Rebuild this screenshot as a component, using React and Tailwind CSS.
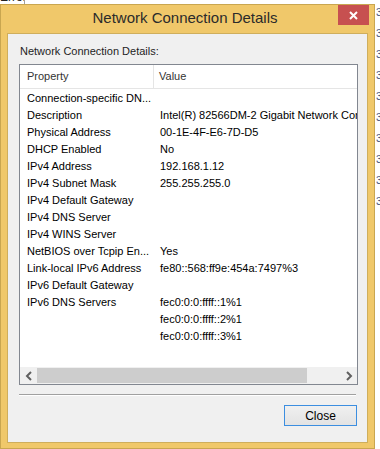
import React from 'react';

const rows = [
  ['Connection-specific DN...', ''],
  ['Description', 'Intel(R) 82566DM-2 Gigabit Network Connection'],
  ['Physical Address', '00-1E-4F-E6-7D-D5'],
  ['DHCP Enabled', 'No'],
  ['IPv4 Address', '192.168.1.12'],
  ['IPv4 Subnet Mask', '255.255.255.0'],
  ['IPv4 Default Gateway', ''],
  ['IPv4 DNS Server', ''],
  ['IPv4 WINS Server', ''],
  ['NetBIOS over Tcpip En...', 'Yes'],
  ['Link-local IPv6 Address', 'fe80::568:ff9e:454a:7497%3'],
  ['IPv6 Default Gateway', ''],
  ['IPv6 DNS Servers', 'fec0:0:0:ffff::1%1'],
  ['', 'fec0:0:0:ffff::2%1'],
  ['', 'fec0:0:0:ffff::3%1'],
];

const font = { fontFamily: '"Liberation Sans", Arial, sans-serif' };

function Chevron({ dir }) {
  return (
    <svg width="8" height="10" viewBox="0 0 8 10">
      <path
        d={dir === 'left' ? 'M6 1 L2 5 L6 9' : 'M2 1 L6 5 L2 9'}
        fill="none"
        stroke="#606060"
        strokeWidth="2"
      />
    </svg>
  );
}

export default function App() {
  return (
    <div className="w-[380px] h-[449px] bg-white overflow-hidden flex" style={font}>
      <div className="w-[375px] flex flex-col">
        {/* window behind, top strip */}
        <div className="h-[4px] flex overflow-hidden">
          <div className="w-[25px] border-r border-[#a0a0a0] overflow-hidden">
            <div className="-mt-[10px] text-[12px] leading-[14px] text-[#222]">Error</div>
          </div>
          <div className="flex-1" />
        </div>

        {/* dialog */}
        <div className="h-[445px] bg-[#f0c86a] border border-[#c9a650] flex flex-col">
          <div className="h-[28px] flex items-start">
            <div className="flex-1 pl-[31px] pt-[3px] text-center text-[15px] leading-[20px] text-[#2b2b2b]">
              Network Connection Details
            </div>
            <div className="w-[31px] h-[20px] mr-[5px] bg-[#c75050] flex items-center justify-center">
              <svg width="9" height="9" viewBox="0 0 9 9">
                <path d="M1 1 L8 8 M8 1 L1 8" stroke="#fff" strokeWidth="2" />
              </svg>
            </div>
          </div>

          <div className="mx-[6px] mb-[5px] flex-1 bg-[#f0f0f0] border border-[#cfae5c] flex flex-col text-[11px] text-black">
            <div className="pl-[12px] pt-[10px] h-[30px] leading-[14px] text-[#1e1e1e]">
              Network Connection Details:
            </div>

            <div className="ml-[11px] w-[339px] h-[321px] bg-white border border-[#828790] flex flex-col">
              <div className="h-[24px] flex border-b border-[#e5e5e5] text-[#333]">
                <div className="w-[134px] border-r border-[#e5e5e5] pl-[7px] flex items-center">Property</div>
                <div className="flex-1 pl-[5px] flex items-center">Value</div>
              </div>
              <div className="flex-1 pt-[1px] overflow-hidden">
                {rows.map(([p, v], i) => (
                  <div key={i} className="h-[17px] flex items-center whitespace-nowrap">
                    <div className="w-[135px] pl-[7px] overflow-hidden">{p}</div>
                    <div className="flex-1 pl-[5px] overflow-hidden">{v}</div>
                  </div>
                ))}
              </div>
              <div className="h-[17px] flex bg-[#f0f0f0]">
                <div className="w-[17px] flex items-center justify-center">
                  <Chevron dir="left" />
                </div>
                <div className="w-[270px] my-[1px] bg-[#cdcdcd]" />
                <div className="flex-1" />
                <div className="w-[17px] flex items-center justify-center">
                  <Chevron dir="right" />
                </div>
              </div>
            </div>

            <div className="ml-[11px] mt-[9px] w-[337px] border-t border-[#a0a0a0] border-b border-b-white" />

            <div className="flex justify-end pr-[10px] pt-[9px]">
              <button className="w-[73px] h-[21px] border border-[#3c8ee0] bg-gradient-to-b from-[#f0f0f0] to-[#e3e3e3] text-[12px] text-black leading-[18px]">
                Close
              </button>
            </div>
          </div>
        </div>
      </div>

      {/* window behind, right strip */}
      <div className="w-[5px] flex flex-col overflow-hidden text-[11px] leading-[14px] text-[#4a5a80]">
        <div className="h-[5px]" />
        {[0, 1, 2, 3, 4, 5, 6, 7, 8, 9].map((i) => (
          <div key={i} className="h-[21px] pl-[1px]">3</div>
        ))}
      </div>
    </div>
  );
}
